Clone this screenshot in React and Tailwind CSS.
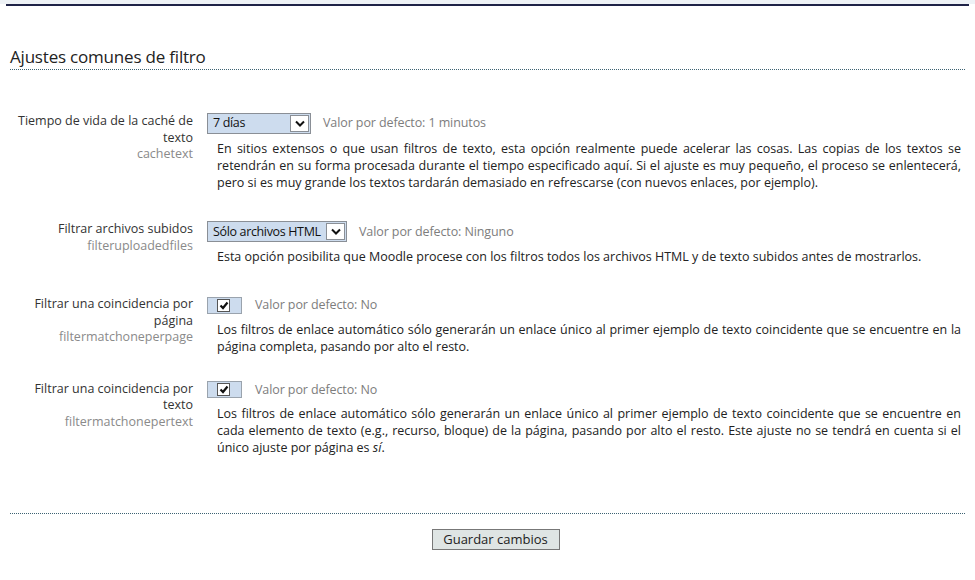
import { useState } from 'react';

const settings = [
  {
    id: 'cachetext',
    label: 'Tiempo de vida de la caché de texto',
    type: 'select',
    value: '7 días',
    width: 'w-[104px]',
    defaultValue: '1 minutos',
    gap: 'mb-[30px]',
    description:
      'En sitios extensos o que usan filtros de texto, esta opción realmente puede acelerar las cosas. Las copias de los textos se retendrán en su forma procesada durante el tiempo especificado aquí. Si el ajuste es muy pequeño, el proceso se enlentecerá, pero si es muy grande los textos tardarán demasiado en refrescarse (con nuevos enlaces, por ejemplo).',
  },
  {
    id: 'filteruploadedfiles',
    label: 'Filtrar archivos subidos',
    type: 'select',
    value: 'Sólo archivos HTML',
    width: 'w-[140px]',
    defaultValue: 'Ninguno',
    gap: 'mb-[30px]',
    description:
      'Esta opción posibilita que Moodle procese con los filtros todos los archivos HTML y de texto subidos antes de mostrarlos.',
  },
  {
    id: 'filtermatchoneperpage',
    label: 'Filtrar una coincidencia por página',
    type: 'checkbox',
    defaultValue: 'No',
    gap: 'mb-[25px]',
    description:
      'Los filtros de enlace automático sólo generarán un enlace único al primer ejemplo de texto coincidente que se encuentre en la página completa, pasando por alto el resto.',
  },
  {
    id: 'filtermatchonepertext',
    label: 'Filtrar una coincidencia por texto',
    type: 'checkbox',
    defaultValue: 'No',
    gap: 'mb-0',
    description: (
      <>
        Los filtros de enlace automático sólo generarán un enlace único al primer ejemplo de texto
        coincidente que se encuentre en cada elemento de texto (e.g., recurso, bloque) de la página,
        pasando por alto el resto. Este ajuste no se tendrá en cuenta si el único ajuste por página es{' '}
        <em>sí</em>.
      </>
    ),
  },
];

function FakeSelect({ value, width }) {
  return (
    <div className={`flex h-[21px] items-center border border-[#8a8f96] bg-[#cddcee] ${width}`}>
      <span className="flex-1 overflow-hidden whitespace-nowrap pl-[5px] text-[12.5px] tracking-[-0.35px] text-[#111]">
        {value}
      </span>
      <span className="mr-[1px] flex h-[17px] w-[19px] shrink-0 items-center justify-center border border-[#8a8f96] bg-white">
        <svg width="10" height="7" viewBox="0 0 10 7">
          <path d="M1 1.5 L5 5.5 L9 1.5" fill="none" stroke="#111" strokeWidth="2" />
        </svg>
      </span>
    </div>
  );
}

function FakeCheckbox() {
  const [checked, setChecked] = useState(true);
  return (
    <button
      type="button"
      onClick={() => setChecked(!checked)}
      className="flex h-[17px] w-[35px] items-center border border-[#9aa3ad] bg-[#cddcee] pl-[9px]"
    >
      <span className="flex h-[13px] w-[13px] items-center justify-center border border-[#555] bg-white">
        {checked && (
          <svg width="10" height="9" viewBox="0 0 10 9">
            <path d="M1.5 4.5 L4 7 L8.5 1.5" fill="none" stroke="#111" strokeWidth="2.2" />
          </svg>
        )}
      </span>
    </button>
  );
}

export default function App() {
  return (
    <div className="min-h-[580px] w-[975px] bg-white font-['Open_Sans',sans-serif] text-[12.5px] text-[#222]">
      <div className="h-[4px] bg-[#eef2f6]" />
      <div className="mx-[6px] h-[2px] bg-[#1f2347]" />

      <div className="px-[10px] pt-[41px]">
        <h2 className="border-b border-dotted border-[#3d6272] pb-[2px] text-[17px] leading-[20px] tracking-[-0.2px] text-[#222]">
          Ajustes comunes de filtro
        </h2>

        <div className="pt-[43px]">
          {settings.map((s) => (
            <div key={s.id} className={`flex ${s.gap}`}>
              <div className="w-[184px] shrink-0 pr-[1px] text-right leading-[16.5px]">
                <div className="text-[#333]">{s.label}</div>
                <div className="text-[#8a8a8a]">{s.id}</div>
              </div>
              <div className="ml-[13px] flex-1 pr-[4px]">
                <div className="flex items-center">
                  {s.type === 'select' ? <FakeSelect value={s.value} width={s.width} /> : <FakeCheckbox />}
                  <span
                    className={`text-[12.5px] tracking-[-0.1px] text-[#7d7d7d] ${
                      s.type === 'select' ? 'ml-[12px]' : 'ml-[13px]'
                    }`}
                  >
                    Valor por defecto: {s.defaultValue}
                  </span>
                </div>
                <p className="mt-[7px] pl-[10px] text-justify leading-[16.8px] text-[#222]">{s.description}</p>
              </div>
            </div>
          ))}
        </div>

        <div className="mt-[56px] border-t border-dotted border-[#3d6272] pt-[15px]">
          <div className="flex justify-center">
            <button
              type="button"
              className="ml-[16px] h-[21px] w-[128px] border border-[#777] bg-[#dfe5e4] text-[13px] text-[#222]"
            >
              Guardar cambios
            </button>
          </div>
        </div>
      </div>
    </div>
  );
}
